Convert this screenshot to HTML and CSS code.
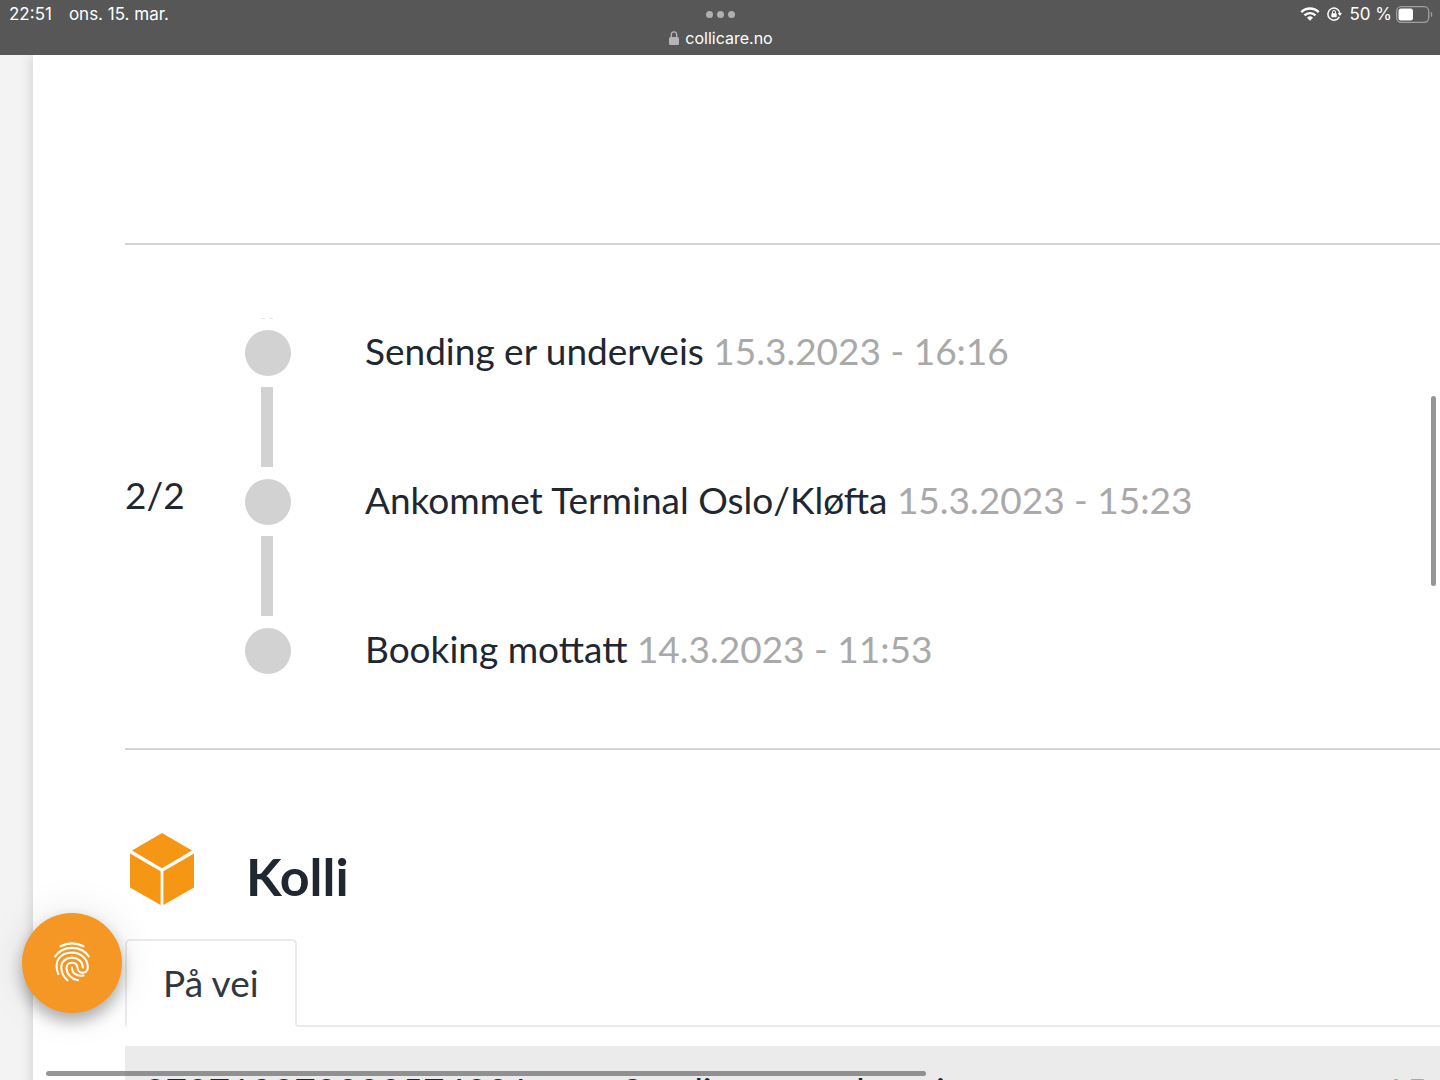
FILE: index.html
```html
<!DOCTYPE html>
<html lang="no">
<head>
<meta charset="utf-8">
<meta name="viewport" content="width=device-width, initial-scale=1">
<title>collicare.no</title>
<link rel="stylesheet" href="styles.css">
</head>
<body>
<header class="status-bar">
  <div class="status-left"><span>22:51</span><span>ons. 15. mar.</span></div>
  <div class="status-center">
    <div class="dots"><i></i><i></i><i></i></div>
    <div class="address">
      <svg width="10" height="14" viewBox="0 0 10 14" aria-hidden="true"><rect x="0" y="6" width="10" height="8" rx="1.5" fill="#b5b5b8"/><path d="M2.3 6.500V3.700a2.700 2.900 0 0 1 5.400 0V6.500" fill="none" stroke="#b5b5b8" stroke-width="1.300"/></svg>
      <span>collicare.no</span>
    </div>
  </div>
  <div class="status-right">
    <svg width="20" height="14" viewBox="0 0 20 14" aria-hidden="true"><g fill="none" stroke="#fff" stroke-width="2.400"><path d="M1.300 5.100a12.400 12.400 0 0 1 17.400 0"/><path d="M4.500 8.400a7.800 7.800 0 0 1 11 0"/></g><path d="M10 13.800 7 10.800a4.300 4.300 0 0 1 6 0z" fill="#fff"/></svg>
    <svg width="15" height="14" viewBox="0 0 15 14" aria-hidden="true"><path d="M12.300 9.800A6 6 0 1 1 12.900 6.500" fill="none" stroke="#fff" stroke-width="1.500"/><path d="M10.800 6h4.200l-2.100 3z" fill="#fff"/><rect x="4.300" y="6.300" width="5.400" height="4" rx=".7" fill="#fff"/><path d="M5.500 6.600V5a1.500 1.500 0 0 1 3 0v1.600" fill="none" stroke="#fff" stroke-width="1"/></svg>
    <span class="battery">50 %
      <svg width="37" height="17" viewBox="0 0 37 17" aria-hidden="true"><rect x=".7" y=".7" width="32" height="15.600" rx="4.500" fill="none" stroke="#a0a0a0" stroke-width="1.300"/><rect x="2.500" y="2.600" width="14.500" height="11.800" rx="2.500" fill="#fff"/><path d="M34.800 5.800c2 .8 2 4.600 0 5.400z" fill="#a0a0a0"/></svg>
    </span>
  </div>
</header>
<div class="page">
  <main class="sheet">
    <section class="spacer"></section>
    <section class="shipment">
      <div class="count">2/2</div>
      <ol class="timeline">
        <li>Sending er underveis <time>15.3.2023 - 16:16</time></li>
        <li>Ankommet Terminal Oslo/Kløfta <time>15.3.2023 - 15:23</time></li>
        <li>Booking mottatt <time>14.3.2023 - 11:53</time></li>
      </ol>
    </section>
    <section class="packages">
      <div class="title">
        <svg width="66" height="74" viewBox="0 0 66 74" aria-hidden="true"><g fill="#f59614"><path d="M33 0 63 17.600 33 35.200 3 17.600z"/><path d="M1 20.600 31.600 38.200V72L1 54.500z"/><path d="M65 20.600 34.400 38.200V72L65 54.500z"/></g></svg>
        <h2>Kolli</h2>
      </div>
      <div class="tabs" role="tablist"><button class="tab" type="button" role="tab" aria-selected="true">På vei</button></div>
      <div class="package"><span>370719370000574001</span><span>Sending er underveis</span><time>15.3.2023</time></div>
    </section>
  </main>
</div>
<button class="consent" type="button" aria-label="Personvern">
  <svg width="36" height="40" viewBox="0 0 36 40" aria-hidden="true"><g fill="none" stroke="#fff" stroke-width="2.100" stroke-linecap="round"><path d="M6.500 4.300Q18-1.500 29.500 4.300"/><path d="M1.200 14.500C9 3 27 3 34.800 14.500"/><path d="M4.300 32C-1 18.500 7 10.600 18 10.600c9.500 0 15.800 7 15.800 14.900 0 6.800-10 7-10.300 0-.3-6.500-11-6.500-11 .5 0 6 5 11 11.500 12.300"/><path d="M13.500 38.300C8.500 34 7.300 29.500 7.300 25.500c0-13 21.200-13.300 21.500 0"/><path d="M18 25.500c0 6 5 9.300 11.500 8"/></g></svg>
</button>
<div class="scroll-v"></div>
<div class="scroll-h"></div>
</body>
</html>
```
FILE: styles.css
```css
* { box-sizing: border-box; }
body {
  margin: 0;
  height: 100vh;
  overflow: hidden;
  display: flex;
  flex-direction: column;
  background: #f3f3f3;
  color: #212730;
  font-family: Lato, sans-serif;
  font-size: 37px;
  line-height: 42px;
}
.status-bar {
  flex: none;
  display: grid;
  grid-template-columns: 1fr auto 1fr;
  height: 55px;
  padding: 4px 7px 0 9px;
  background: #575757;
  color: #fff;
  font-family: Inter, sans-serif;
  font-size: 17px;
  line-height: 20px;
}
.status-left { display: flex; gap: 17px; }
.status-center { display: flex; flex-direction: column; align-items: center; gap: 4px; }
.dots { display: flex; align-items: center; gap: 4px; height: 20px; }
.dots i { width: 7px; height: 7px; border-radius: 50%; background: #b0b0b0; }
.address { display: flex; align-items: center; gap: 6px; font-size: 16px; }
.status-right { display: flex; justify-content: flex-end; align-items: center; gap: 7px; height: 20px; }
.battery { display: flex; align-items: center; gap: 4px; }
.page { flex: 1; padding-left: 33px; min-height: 0; overflow: hidden; }
.sheet { background: #fff; padding-left: 92px; min-height: 100%; box-shadow: 0 0 12px rgba(0, 0, 0, .16); }
.spacer { height: 188px; }
.shipment {
  display: grid;
  grid-template-columns: 120px 1fr;
  align-items: center;
  border-top: 2px solid #d4d4d4;
  border-bottom: 2px solid #d4d4d4;
}
.count { padding-bottom: 4px; }
.timeline { list-style: none; margin: 0; padding: 73px 0 74px; }
.timeline::before {
  content: "";
  display: block;
  width: 12px;
  height: 1px;
  margin: 0 0 11px 16px;
  background: linear-gradient(90deg, #e4e4e4 4px, #fff 4px 8px, #e4e4e4 8px);
}
.timeline li {
  position: relative;
  min-height: 149px;
  padding-left: 120px;
}
.timeline li:last-child { min-height: 46px; }
.timeline li::before {
  content: "";
  position: absolute;
  left: 0;
  top: 0;
  width: 46px;
  height: 46px;
  border-radius: 50%;
  background: #d2d2d2;
}
.timeline li:not(:last-child)::after {
  content: "";
  position: absolute;
  left: 16px;
  top: 57px;
  width: 12px;
  height: 80px;
  background: #d2d2d2;
}
time { color: #a9a9a9; }
.packages { padding-top: 83px; }
.title { display: flex; gap: 51px; padding-left: 4px; }
.title h2 { margin: 0; padding-top: 12px; font-size: 52px; line-height: 62px; }
.tabs { margin-top: 32px; border-bottom: 2px solid #ebebeb; display: flex; }
.tab {
  height: 88px;
  margin-bottom: -2px;
  padding: 0 36px;
  border: 2px solid #ebebeb;
  border-bottom-color: #fff;
  border-radius: 5px 5px 0 0;
  background: #fff;
  color: #303740;
  font: inherit;
}
.package {
  display: grid;
  grid-template-columns: 478px 1fr 56px;
  margin-top: 19px;
  padding: 24px 0 24px 19px;
  background: #ebebeb;
  white-space: nowrap;
}
.consent {
  position: fixed;
  left: 22px;
  bottom: 67px;
  width: 100px;
  height: 100px;
  padding: 0 0 2px;
  border: 0;
  border-radius: 50%;
  display: grid;
  place-items: center;
  background: #f49725;
  box-shadow: 0 8px 16px rgba(0, 0, 0, .3), 0 0 40px rgba(0, 0, 0, .1);
}
.scroll-v, .scroll-h { position: fixed; border-radius: 3px; background: rgba(100, 100, 100, .68); }
.scroll-v { right: 4px; top: 396px; width: 5px; height: 190px; }
.scroll-h { left: 46px; bottom: 4px; width: 880px; height: 5px; }
```
